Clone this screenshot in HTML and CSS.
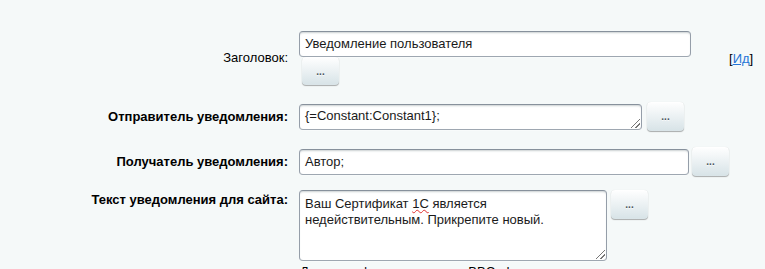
FILE: index.html
```html
<!DOCTYPE html>
<html lang="ru">
<head>
<meta charset="utf-8">
<link rel="stylesheet" href="styles.css">
</head>
<body>
<div class="form">
  <div class="row row-title">
    <div class="label">Заголовок:</div>
    <div class="field stack">
      <div class="input w-title">Уведомление пользователя</div>
      <button class="btn btn-under" type="button">...</button>
    </div>
    <div class="idlink">[<a href="#">Ид</a>]</div>
  </div>

  <div class="row row-sender">
    <div class="label bold">Отправитель уведомления:</div>
    <div class="field inline">
      <div class="input ta w-sender">{=Constant:Constant1};<span class="grip"></span></div>
      <button class="btn btn-gap5" type="button">...</button>
    </div>
  </div>

  <div class="row row-recipient">
    <div class="label bold">Получатель уведомления:</div>
    <div class="field inline">
      <div class="input w-recipient">Автор;</div>
      <button class="btn btn-gap3" type="button">...</button>
    </div>
  </div>

  <div class="row row-text">
    <div class="label bold label-top">Текст уведомления для сайта:</div>
    <div class="field">
      <div class="inline top">
        <div class="input ta big w-text">Ваш Сертификат <span class="spell">1С</span> является недействительным. Прикрепите новый.<span class="grip"></span></div>
        <button class="btn btn-gap4" type="button">...</button>
      </div>
      <div class="hint">Доступно форматирование BBCode</div>
    </div>
  </div>
</div>
</body>
</html>
```

FILE: styles.css
```css
html, body {
  margin: 0;
  padding: 0;
  background: #f5f9f9;
  font-family: "Liberation Sans", Arial, sans-serif;
  font-size: 13px;
  color: #000;
  overflow: hidden;
}

.form {
  padding-top: 31px;
}

.row {
  display: flex;
  align-items: center;
}

.label {
  width: 288px;
  flex: none;
  text-align: right;
  margin-right: 11px;
  color: #000;
  line-height: 16px;
}

.bold {
  font-weight: bold;
}

.label-top {
  align-self: flex-start;
  padding-top: 2px;
}

.field.stack {
  display: flex;
  flex-direction: column;
  align-items: flex-start;
}

.field.inline,
.inline {
  display: flex;
  align-items: center;
}

.inline.top {
  align-items: flex-start;
}

.row-sender { margin-top: 17px; }
.row-recipient { margin-top: 16px; }
.row-text { margin-top: 14px; align-items: flex-start; }

.input {
  box-sizing: border-box;
  height: 26px;
  line-height: 24px;
  padding: 0 5px;
  background: #fff;
  border: 1px solid;
  border-color: #87919c #959ea9 #9ea7b1 #959ea9;
  border-radius: 4px;
  box-shadow: 0 1px 0 0 rgba(255,255,255,0.3), inset 0 2px 2px -1px rgba(180,188,191,0.7);
  color: #1a1a1a;
  white-space: nowrap;
  position: relative;
}

.ta {
  line-height: 16px;
  padding-top: 3px;
}

.big {
  height: 71px;
  white-space: normal;
  padding-top: 5px;
  padding-right: 20px;
}

.w-title { width: 392px; }
.w-sender { width: 343px; }
.w-recipient { width: 390px; }
.w-text { width: 308px; }

.grip {
  position: absolute;
  right: 1px;
  bottom: 1px;
  width: 9px;
  height: 9px;
  background:
    linear-gradient(135deg, transparent 45%, #777 45%, #777 52%, transparent 52%, transparent 72%, #777 72%, #777 80%, transparent 80%);
}

.spell {
  text-decoration-line: underline;
  text-decoration-style: wavy;
  text-decoration-color: #e03030;
  text-decoration-thickness: 1px;
  text-underline-offset: 1px;
}

.btn {
  box-sizing: border-box;
  width: 37px;
  height: 29px;
  flex: none;
  border: none;
  border-radius: 4px;
  padding: 0;
  box-shadow: 0 0 1px rgba(0,0,0,.11), 0 1px 1px rgba(0,0,0,.3), inset 0 1px #fff, inset 0 0 1px rgba(255,255,255,.5);
  background-color: #e0e9ec;
  background-image: linear-gradient(to top, #d7e3e7, #fff);
  color: #4a555d;
  font-family: "Liberation Sans", Arial, sans-serif;
  font-weight: bold;
  font-size: 10px;
  text-shadow: 0 1px rgba(255,255,255,0.7);
  line-height: 27px;
}

.btn-under { margin-left: 3px; margin-top: 0; height: 28px; }
.btn-gap5 { margin-left: 5px; }
.btn-gap3 { margin-left: 3px; }
.btn-gap4 { margin-left: 4px; }

.idlink {
  margin-left: 38px;
  color: #000;
}

.idlink a {
  color: #2675d7;
  text-decoration: underline;
}

.hint {
  margin-top: 3px;
  margin-left: 1px;
  line-height: 16px;
  color: #000;
}
```
